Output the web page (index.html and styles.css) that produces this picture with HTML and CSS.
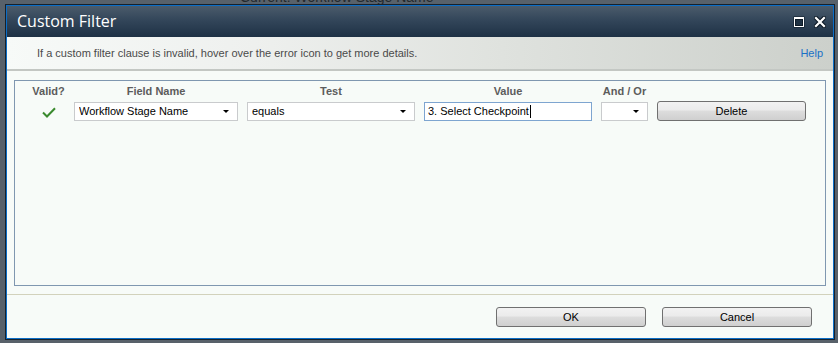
FILE: index.html
```html
<!DOCTYPE html>
<html>
<head>
    <meta charset="utf-8"/>
    <title>Custom Filter</title>
    <link rel="stylesheet" href="styles.css">
</head>
<body>
<div class="page">
    <div class="page-current">Current: Workflow Stage Name</div>
</div>

<div class="dialog">
    <div class="frame">
        <div class="titlebar">
            <span class="title">Custom Filter</span>
            <span class="tools">
                <svg class="tool" width="12" height="12" viewBox="0 0 12 12">
                    <rect x="0.5" y="0.5" width="11" height="11" fill="#0e1a26"/>
                    <rect x="1" y="1" width="10" height="10" fill="#fff"/>
                    <rect x="2" y="3" width="8" height="7" fill="#1f3143"/>
                    <rect x="2.5" y="3.5" width="7" height="6" fill="none" stroke="#0e1a26"/>
                </svg>
                <svg class="tool" width="12" height="12" viewBox="0 0 12 12">
                    <path d="M2 2 L10 10 M10 2 L2 10" stroke="#0e1a26" stroke-width="4.4" stroke-linecap="square"/>
                    <path d="M2 2 L10 10 M10 2 L2 10" stroke="#fff" stroke-width="2.2" stroke-linecap="square"/>
                </svg>
            </span>
        </div>

        <div class="band">
            <span class="hint">If a custom filter clause is invalid, hover over the error icon to get more details.</span>
            <a class="help" href="#">Help</a>
        </div>

        <div class="body">
            <div class="clauses">
                <div class="th th-valid">Valid?</div>
                <div class="th">Field Name</div>
                <div class="th">Test</div>
                <div class="th">Value</div>
                <div class="th">And / Or</div>
                <div class="th"></div>

                <div class="cell-valid">
                    <svg width="14" height="11" viewBox="0 0 14 11">
                        <path d="M1 5.5 L5 9.5 L13 1.2" fill="none" stroke="#3a8a2e" stroke-width="2"/>
                    </svg>
                </div>
                <div class="combo"><span>Workflow Stage Name</span><i class="arrow"></i></div>
                <div class="combo"><span>equals</span><i class="arrow"></i></div>
                <div class="textbox"><span>3. Select Checkpoint</span><i class="caret"></i></div>
                <div class="combo"><span></span><i class="arrow"></i></div>
                <a class="btn" href="#">Delete</a>
            </div>
        </div>

        <div class="footer">
            <a class="btn btn-wide" href="#">OK</a>
            <a class="btn btn-wide" href="#">Cancel</a>
        </div>
    </div>
</div>
</body>
</html>
```

FILE: styles.css
```css
html,body{margin:0;padding:0;}
body{width:838px;height:343px;overflow:hidden;background:#58616a;font-family:"Liberation Sans",Arial,sans-serif;font-size:11px;color:#000;position:relative;}
a{text-decoration:none;color:inherit;}

.page{height:343px;}
.page-current{margin:-10px 0 0 240px;font-size:14px;line-height:14px;color:#23292e;}

.dialog{position:absolute;top:4px;left:5px;width:830px;height:336px;box-sizing:border-box;border:1px solid #16212c;}
.frame{height:100%;box-sizing:border-box;border:1px solid #0b6dc6;background:#f7fbf8;display:flex;flex-direction:column;}

.titlebar{height:31px;display:flex;align-items:center;justify-content:space-between;padding:0 7px 0 10px;background:linear-gradient(#4b5b6b,#33465a 45%,#1e3145);}
.title{font-family:"Open Sans",sans-serif;font-size:16px;line-height:31px;color:#fff;}
.tools{display:flex;gap:9px;margin-top:1px;}
.tool{display:block;}

.band{height:32px;display:flex;align-items:center;justify-content:space-between;padding:0 10px 0 30px;border-bottom:2px solid #c3c7c3;background:linear-gradient(to right,#f7faf8,#eef0ee 30%,#dfe2de 60%,#ccd0cb);}
.hint{line-height:16px;color:#4a4a4a;}
.help{line-height:16px;color:#1a70c6;}

.body{padding:9px 7px 0 7px;}
.clauses{height:206px;box-sizing:border-box;border:1px solid #7f97b0;padding-top:2px;display:grid;grid-template-columns:50px 164px 168px 168px 47px 149px;grid-template-rows:16px 20px;column-gap:9px;row-gap:2px;align-content:start;}
.th{font-weight:bold;color:#5c5c5c;line-height:16px;text-align:center;}
.th-valid{padding-left:17px;}
.cell-valid{padding-left:17px;display:flex;justify-content:center;align-items:center;padding-top:2px;}
.cell-valid svg{display:block;}

.combo,.textbox{margin-top:1px;height:19px;box-sizing:border-box;background:#fff;border:1px solid #c9cbcd;display:flex;align-items:center;padding:0 8px 0 4px;line-height:17px;}
.combo span{flex:1;white-space:nowrap;overflow:hidden;}
.arrow{width:0;height:0;border-left:3px solid transparent;border-right:3px solid transparent;border-top:3px solid #000;}
.textbox{border-color:#7ea5d0;padding-left:3px;}
.caret{width:1px;height:13px;background:#000;margin-left:1px;}

.btn{display:flex;align-items:center;justify-content:center;height:20px;box-sizing:border-box;border:1px solid #707070;border-radius:3px;background:linear-gradient(#f2f2f2,#ebebeb 45%,#dddddd 50%,#cfcfcf);color:#000;}

.footer{flex:1;border-top:1px solid #d2d2bc;margin-top:8px;display:flex;justify-content:flex-end;align-items:flex-start;gap:16px;padding:12px 21px 0 0;}
.btn-wide{width:150px;}
```
